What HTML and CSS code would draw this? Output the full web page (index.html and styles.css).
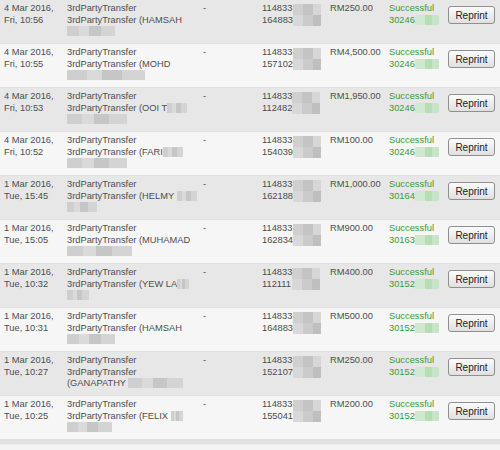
FILE: index.html
```html
<!DOCTYPE html>
<html>
<head>
<meta charset="utf-8">
<link rel="stylesheet" href="styles.css">
</head>
<body>
<div class="list">
  <div class="row odd">
    <div class="c date">4 Mar 2016,<br>Fri, 10:56</div>
    <div class="c desc">3rdPartyTransfer<br>3rdPartyTransfer (HAMSAH<br><span class="blur w48"></span></div>
    <div class="c dash">-</div>
    <div class="c acct"><div class="nums">114833<br>164883</div><span class="mosaic"></span></div>
    <div class="c amt">RM250.00</div>
    <div class="c status">Successful<br>30246<span class="gblur"></span></div>
    <div class="c act"><button class="btn">Reprint</button></div>
  </div>
  <div class="row even">
    <div class="c date">4 Mar 2016,<br>Fri, 10:55</div>
    <div class="c desc">3rdPartyTransfer<br>3rdPartyTransfer (MOHD<br><span class="blur w78"></span></div>
    <div class="c dash">-</div>
    <div class="c acct"><div class="nums">114833<br>157102</div><span class="mosaic"></span></div>
    <div class="c amt">RM4,500.00</div>
    <div class="c status">Successful<br>30246<span class="gblur"></span></div>
    <div class="c act"><button class="btn">Reprint</button></div>
  </div>
  <div class="row odd">
    <div class="c date">4 Mar 2016,<br>Fri, 10:53</div>
    <div class="c desc">3rdPartyTransfer<br>3rdPartyTransfer (OOI T<span class="blur w20"></span><br><span class="blur w60"></span></div>
    <div class="c dash">-</div>
    <div class="c acct"><div class="nums">114833<br>112482</div><span class="mosaic"></span></div>
    <div class="c amt">RM1,950.00</div>
    <div class="c status">Successful<br>30246<span class="gblur"></span></div>
    <div class="c act"><button class="btn">Reprint</button></div>
  </div>
  <div class="row even">
    <div class="c date">4 Mar 2016,<br>Fri, 10:52</div>
    <div class="c desc">3rdPartyTransfer<br>3rdPartyTransfer (FARI<span class="blur w20"></span><br><span class="blur w60"></span></div>
    <div class="c dash">-</div>
    <div class="c acct"><div class="nums">114833<br>154039</div><span class="mosaic"></span></div>
    <div class="c amt">RM100.00</div>
    <div class="c status">Successful<br>30246<span class="gblur"></span></div>
    <div class="c act"><button class="btn">Reprint</button></div>
  </div>
  <div class="row odd">
    <div class="c date">1 Mar 2016,<br>Tue, 15:45</div>
    <div class="c desc">3rdPartyTransfer<br>3rdPartyTransfer (HELMY <span class="blur w20"></span><br><span class="blur w30"></span></div>
    <div class="c dash">-</div>
    <div class="c acct"><div class="nums">114833<br>162188</div><span class="mosaic"></span></div>
    <div class="c amt">RM1,000.00</div>
    <div class="c status">Successful<br>30164<span class="gblur"></span></div>
    <div class="c act"><button class="btn">Reprint</button></div>
  </div>
  <div class="row even">
    <div class="c date">1 Mar 2016,<br>Tue, 15:05</div>
    <div class="c desc">3rdPartyTransfer<br>3rdPartyTransfer (MUHAMAD<br><span class="blur w65"></span></div>
    <div class="c dash">-</div>
    <div class="c acct"><div class="nums">114833<br>162834</div><span class="mosaic"></span></div>
    <div class="c amt">RM900.00</div>
    <div class="c status">Successful<br>30163<span class="gblur"></span></div>
    <div class="c act"><button class="btn">Reprint</button></div>
  </div>
  <div class="row odd">
    <div class="c date">1 Mar 2016,<br>Tue, 10:32</div>
    <div class="c desc">3rdPartyTransfer<br>3rdPartyTransfer (YEW LA<span class="blur w12"></span><br><span class="blur w22"></span></div>
    <div class="c dash">-</div>
    <div class="c acct"><div class="nums">114833<br>112111</div><span class="mosaic"></span></div>
    <div class="c amt">RM400.00</div>
    <div class="c status">Successful<br>30152<span class="gblur"></span></div>
    <div class="c act"><button class="btn">Reprint</button></div>
  </div>
  <div class="row even">
    <div class="c date">1 Mar 2016,<br>Tue, 10:31</div>
    <div class="c desc">3rdPartyTransfer<br>3rdPartyTransfer (HAMSAH<br><span class="blur w48"></span></div>
    <div class="c dash">-</div>
    <div class="c acct"><div class="nums">114833<br>164883</div><span class="mosaic"></span></div>
    <div class="c amt">RM500.00</div>
    <div class="c status">Successful<br>30152<span class="gblur"></span></div>
    <div class="c act"><button class="btn">Reprint</button></div>
  </div>
  <div class="row odd">
    <div class="c date">1 Mar 2016,<br>Tue, 10:27</div>
    <div class="c desc">3rdPartyTransfer<br>3rdPartyTransfer<br>(GANAPATHY <span class="blur w55"></span></div>
    <div class="c dash">-</div>
    <div class="c acct"><div class="nums">114833<br>152107</div><span class="mosaic"></span></div>
    <div class="c amt">RM250.00</div>
    <div class="c status">Successful<br>30152<span class="gblur"></span></div>
    <div class="c act"><button class="btn">Reprint</button></div>
  </div>
  <div class="row even">
    <div class="c date">1 Mar 2016,<br>Tue, 10:25</div>
    <div class="c desc">3rdPartyTransfer<br>3rdPartyTransfer (FELIX <span class="blur w12"></span><br><span class="blur w45"></span></div>
    <div class="c dash">-</div>
    <div class="c acct"><div class="nums">114833<br>155041</div><span class="mosaic"></span></div>
    <div class="c amt">RM200.00</div>
    <div class="c status">Successful<br>30152<span class="gblur"></span></div>
    <div class="c act"><button class="btn">Reprint</button></div>
  </div>
  <div class="foot"></div>
</div>
</body>
</html>
```

FILE: styles.css
```css
html, body {
  margin: 0;
  padding: 0;
  background: #f4f4f4;
}
body {
  font-family: "Liberation Sans", Arial, sans-serif;
  font-size: 9.3px;
  line-height: 11.7px;
  color: #4d4d4d;
  width: 500px;
  height: 450px;
  overflow: hidden;
}
.list {
  display: flex;
  flex-direction: column;
}
.row {
  display: flex;
  height: 44px;
  box-sizing: border-box;
  padding-top: 3px;
  padding-left: 4px;
  border-bottom: 1px solid #e0e0e0;
}
.row.odd { background: #e7e7e7; }
.row.even { background: #f6f6f6; }
.c { flex: none; white-space: nowrap; }
.date { width: 63px; }
.desc { width: 136px; }
.dash { width: 59px; }
.acct { width: 68px; display: flex; align-items: flex-start; }
.nums { flex: none; }
.amt { width: 59px; }
.status { width: 59px; color: #3a9a3a; }
.act { width: 48px; }
.mosaic {
  display: block;
  flex: none;
  width: 28px;
  height: 22px;
  margin-top: 1px;
  background:
    linear-gradient(90deg, #cfcfcf 0 35%, #c4c4c4 35% 70%, #d6d6d6 70% 100%) top/100% 50% no-repeat,
    linear-gradient(90deg, #d8d8d8 0 35%, #cbcbcb 35% 70%, #bfbfbf 70% 100%) bottom/100% 50% no-repeat;
}
.blur {
  display: inline-block;
  height: 10px;
  vertical-align: -2px;
  background: linear-gradient(90deg, #cfcfcf 0 25%, #dadada 25% 45%, #c6c6c6 45% 70%, #d4d4d4 70% 100%);
}
.w12 { width: 12px; }
.w20 { width: 20px; }
.w22 { width: 22px; }
.w30 { width: 30px; }
.w45 { width: 45px; }
.w48 { width: 48px; }
.w55 { width: 55px; }
.w60 { width: 60px; }
.w65 { width: 65px; }
.w78 { width: 78px; }
.gblur {
  display: inline-block;
  width: 24px;
  height: 10px;
  vertical-align: -2px;
  background: linear-gradient(90deg, #cfe8cf 0 40%, #b7ddb7 40% 70%, #c6e4c6 70% 100%);
}
.btn {
  margin-top: 3px;
  width: 47px;
  height: 18px;
  padding: 0;
  font-family: "Liberation Sans", Arial, sans-serif;
  font-size: 10px;
  color: #222;
  background: linear-gradient(#fbfbfb, #e0e0e0);
  border: 1px solid #8f8f8f;
  border-radius: 3px;
}
.foot {
  height: 4px;
  background: #e2e2e2;
  border-bottom: 1px solid #ececec;
}
```
